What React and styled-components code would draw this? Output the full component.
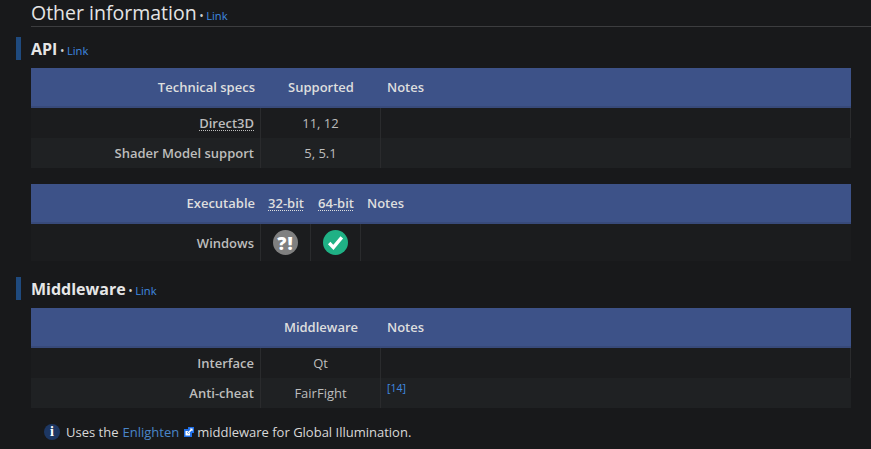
import React from 'react';
import styled, { createGlobalStyle } from 'styled-components';

const GlobalStyle = createGlobalStyle`
  html, body { margin: 0; padding: 0; background: #18191b; }
  body { font-family: "Open Sans", "Noto Sans", sans-serif; color: #d6d6d6; overflow: hidden; }
`;

const Page = styled.div`
  width: 871px;
  height: 449px;
  overflow: hidden;
  box-sizing: border-box;
  padding-left: 16px;
`;

const MainHeading = styled.div`
  margin-left: 15px;
  height: 26px;
  border-bottom: 1px solid #3c3d3f;
  display: flex;
  align-items: baseline;
  font-size: 19.5px;
  line-height: 26px;
  color: #e4e4e4;
`;

const Dot = styled.span`
  font-size: 12px;
  font-weight: 400;
  margin: 0 2.5px 0 2.5px;
  color: #d0d0d0;
`;

const SmallLink = styled.a`
  font-size: 11.2px;
  font-weight: 400;
  color: #3f8ae0;
`;

const SubHeading = styled.div`
  margin-top: ${p => p.$top}px;
  height: 23px;
  border-left: 5px solid #1f4a7e;
  padding-left: 10px;
  display: flex;
  align-items: baseline;
  font-size: 16px;
  font-weight: 700;
  line-height: 24px;
  color: #e6e6e6;
`;

const Table = styled.div`
  margin-left: 15px;
  margin-top: ${p => p.$top}px;
  width: 820px;
  display: grid;
  grid-template-columns: ${p => p.$cols};
`;

const Head = styled.div`
  height: 40px;
  box-sizing: border-box;
  background: #3d5288;
  border-bottom: 2px solid #384a7a;
  display: flex;
  align-items: center;
  justify-content: ${p => p.$align || 'center'};
  padding: ${p => p.$pad || '0'};
  font-size: 13px;
  font-weight: 600;
  color: #dedede;
`;

const Cell = styled.div`
  height: ${p => p.$tall ? 37 : 30}px;
  box-sizing: border-box;
  background: ${p => p.$alt ? '#1f2123' : '#1b1c1e'};
  border-right: 1px solid #2a2b2d;
  display: flex;
  align-items: center;
  justify-content: ${p => p.$align || 'center'};
  padding: ${p => p.$pad || '0'};
  font-size: 13px;
  color: #bdbdbd;
  &:last-child { border-right: none; }
`;

const RowLabel = styled(Cell)`
  justify-content: flex-end;
  padding-right: 6px;
  font-weight: 600;
`;

const Abbr = styled.span`
  text-decoration: underline dotted;
  text-underline-offset: 2px;
  text-decoration-thickness: 1px;
`;

const Ref = styled.a`
  font-size: 10.5px;
  color: #3f8ae0;
  align-self: flex-start;
  margin-top: 3px;
`;

const Rating = styled.div`
  width: 25px;
  height: 25px;
  border-radius: 50%;
  background: ${p => p.$bg};
  display: flex;
  align-items: center;
  justify-content: center;
  font-size: 18px;
  font-weight: 800;
  letter-spacing: 1px;
  color: #fff;
`;

const Note = styled.div`
  margin: 13px 0 0 28px;
  display: flex;
  align-items: center;
  font-size: 13px;
  line-height: 22px;
  color: #d8d8d8;
`;

const InfoBadge = styled.span`
  width: 16px;
  height: 16px;
  border-radius: 50%;
  background: #1d3763;
  color: #fff;
  display: flex;
  align-items: center;
  justify-content: center;
  font-family: "Liberation Serif", serif;
  font-size: 14px;
  font-weight: 700;
  margin-right: 6px;
`;

const NoteLink = styled.a`
  color: #4a86c8;
  margin: 0 5px 0 4px;
`;

const ExternalIcon = () => (
  <svg width="10" height="10" viewBox="0 0 10 10" style={{ marginRight: 3 }}>
    <rect x="0" y="2" width="8" height="8" fill="#1f6fe8" />
    <rect x="1.5" y="4" width="4.5" height="4.5" fill="#fff" />
    <path d="M4 0h6v6H7.5L6.5 5 4.5 7 3 5.5 5 3.5 4 2.5z" fill="#1f6fe8" />
    <path d="M5.6 1.4h3v3L7.6 3.4 4.6 6.4 3.6 5.4 6.6 2.4z" fill="#fff" />
  </svg>
);

const CheckIcon = () => (
  <svg width="25" height="25" viewBox="0 0 25 25">
    <path d="M6.2 13l4.2 4.4 8.4-10" fill="none" stroke="#fff" strokeWidth="3.4" />
  </svg>
);

const App = () => (
  <Page>
    <GlobalStyle />
    <MainHeading>
      Other information<Dot>•</Dot><SmallLink>Link</SmallLink>
    </MainHeading>

    <SubHeading $top={10}>
      API<Dot>•</Dot><SmallLink>Link</SmallLink>
    </SubHeading>
    <Table $top={8} $cols="230px 120px 470px">
      <Head $align="flex-end" $pad="0 6px 0 0">Technical specs</Head>
      <Head>Supported</Head>
      <Head $align="flex-start" $pad="0 0 0 6px">Notes</Head>
      <RowLabel><Abbr>Direct3D</Abbr></RowLabel>
      <Cell>11, 12</Cell>
      <Cell />
      <RowLabel $alt>Shader Model support</RowLabel>
      <Cell $alt>5, 5.1</Cell>
      <Cell $alt />
    </Table>

    <Table $top={16} $cols="230px 50px 50px 490px">
      <Head $align="flex-end" $pad="0 6px 0 0">Executable</Head>
      <Head><Abbr>32-bit</Abbr></Head>
      <Head><Abbr>64-bit</Abbr></Head>
      <Head $align="flex-start" $pad="0 0 0 6px">Notes</Head>
      <RowLabel $tall>Windows</RowLabel>
      <Cell $tall><Rating $bg="#808080">?!</Rating></Cell>
      <Cell $tall><Rating $bg="#1fb185"><CheckIcon /></Rating></Cell>
      <Cell $tall />
    </Table>

    <SubHeading $top={16}>
      Middleware<Dot>•</Dot><SmallLink>Link</SmallLink>
    </SubHeading>
    <Table $top={8} $cols="230px 120px 470px">
      <Head />
      <Head>Middleware</Head>
      <Head $align="flex-start" $pad="0 0 0 6px">Notes</Head>
      <RowLabel>Interface</RowLabel>
      <Cell>Qt</Cell>
      <Cell />
      <RowLabel $alt>Anti-cheat</RowLabel>
      <Cell $alt>FairFight</Cell>
      <Cell $alt $align="flex-start" $pad="0 0 0 6px"><Ref>[14]</Ref></Cell>
    </Table>

    <Note>
      <InfoBadge>i</InfoBadge>
      Uses the<NoteLink>Enlighten</NoteLink><ExternalIcon />middleware for Global Illumination.
    </Note>
  </Page>
);

export default App;
